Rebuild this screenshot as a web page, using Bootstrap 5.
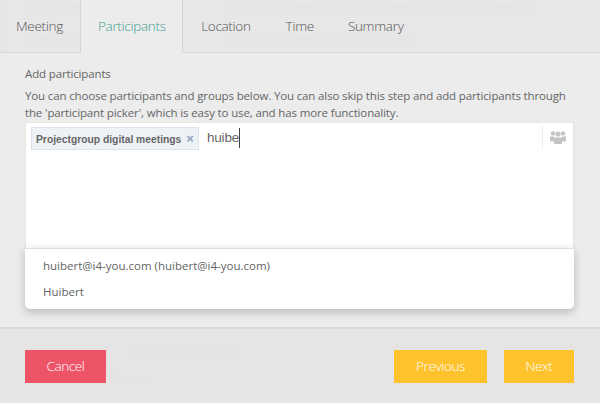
<!DOCTYPE html>
<html lang="en"><head><meta charset="utf-8">
<link href="https://cdn.jsdelivr.net/npm/bootstrap@5.3.0/dist/css/bootstrap.min.css" rel="stylesheet">
<style>
html,body{margin:0;height:403px;overflow:hidden}
body{font-family:"Open Sans","Liberation Sans",sans-serif;background:#ececec;color:#666;font-size:13px}
.stage{width:600px;height:403px;position:relative;overflow:hidden}
.ghost{position:absolute;color:#e3e3e3;font-size:12.4px;font-weight:300;white-space:nowrap;line-height:16px}
.modal-shell{position:absolute;inset:0;display:flex;flex-direction:column}
.tabbar{height:53px;background:#e7e7e7;border-bottom:1px solid #d9d9d9;display:flex;position:relative}
.tabitem{height:53px;padding:0 17.5px;line-height:52px;font-size:13.5px;letter-spacing:-.3px;font-weight:300;color:#555;white-space:nowrap;position:relative}
.tabitem.first{border-left:1px solid #e2e2e2;margin-left:5px;padding:0 17px 0 10px}
.tabitem.on{background:#ececec;color:#3fa08f;border-left:1px solid #d6d6d6;border-right:1px solid #d6d6d6;padding:0 16px 0 17px;margin-right:1px}
.tabitem:last-child{margin-left:-1px}
.bodyarea{height:274px;padding:12px 25px 0;position:relative}
.lbl{font-size:11.5px;letter-spacing:-.14px;line-height:17px;margin-bottom:5px;color:#666}
.desc{font-size:11.5px;letter-spacing:-.14px;line-height:17px;color:#666;margin:0}
.pickbox{height:128px;margin-top:1px;background:#fff;border:1px solid #e6e6e6;border-right-width:2px;display:flex}
.pickmain{flex:1;display:flex;align-items:flex-start;padding:4px 5px}
.chip{background:#eef1f6;border:1px solid #dde3ee;height:23px;width:168px;flex:none;font:700 10.3px/21px "Liberation Sans",Arial,sans-serif;color:#666;padding-left:4px;white-space:nowrap;margin-right:8px}
.chipx{color:#8fa3bd;font-size:13px;margin-left:2px}
.typed{font:13.5px/20px "Liberation Sans",Arial,sans-serif;letter-spacing:-.2px;color:#666;border-right:1px solid #444;height:20px;margin-top:1px}
.pickicon{width:31px;margin:3px 0 0;height:24px;border-left:1px solid #eee;display:flex;align-items:center;justify-content:center;padding-bottom:2px}
.dropbox{position:absolute;left:25px;top:195px;width:549px;height:61px;background:#fff;border-top:1px solid #dedede;border-radius:0 0 5px 5px;box-shadow:0 3px 10px rgba(0,0,0,.22);padding:0 0 0 18px;font-size:11.5px;font-weight:500;color:#636363}
.dropbox div{height:26px;line-height:26px}
.dropbox div:first-child{margin-top:4px}
.footbar{flex:1;background:#e5e5e5;border-top:2px solid #d9d9d9;padding:21px 26px 0 25px;display:flex;position:relative}
.footbar .ghost{color:#e1e1e1}
.actbtn{height:33px;border:0;border-radius:0;color:#fff;font-size:13.5px;letter-spacing:-.4px;font-weight:300;padding:0;line-height:33px;text-align:center;position:relative}
.cancelbtn{width:81px;background:#ee5468}
.prevbtn{width:93px;background:#fec22c;margin-left:auto;margin-right:17px}
.nextbtn{width:70px;background:#fec22c}
</style></head><body>
<div class="stage">
<div class="modal-shell">
 <div class="tabbar">
  <span class="ghost" style="left:29px;top:-1px">Organizer</span>
  <span class="ghost" style="left:230px;top:-1px">Silvan van Heerden | Easy2Meet (silvan@easy2meet.nl)</span>
  <span class="ghost" style="left:29px;top:31px">Created by</span>
  <span class="ghost" style="left:230px;top:31px">Silvan van Heerden | Easy2Meet</span>
  <div class="tabitem first">Meeting</div>
  <div class="tabitem on">Participants</div>
  <div class="tabitem">Location</div>
  <div class="tabitem">Time</div>
  <div class="tabitem">Summary</div>
 </div>
 <div class="bodyarea">
  <div class="lbl">Add participants</div>
  <p class="desc">You can choose participants and groups below. You can also skip this step and add participants through the 'participant picker', which is easy to use, and has more functionality.</p>
  <div class="pickbox">
   <div class="pickmain"><span class="chip">Projectgroup digital meetings <span class="chipx">×</span></span><span class="typed">huibe</span></div>
   <div class="pickicon"><svg width="16" height="14" viewBox="0 0 16 14"><g fill="#c4c4c4"><circle cx="3" cy="3.4" r="2.2"/><circle cx="13" cy="3.4" r="2.2"/><circle cx="8" cy="4" r="2.6"/><path d="M0 6.5h4v5H0.8A.8.8 0 0 1 0 10.700zM12 6.500h4v4.200a.8.8 0 0 1-.8.8H12z"/><path d="M4 7.500h8V13a1 1 0 0 1-1 1H5a1 1 0 0 1-1-1z"/></g></svg></div>
  </div>
  <div class="dropbox"><div>huibert@i4-you.com (huibert@i4-you.com)</div><div>Huibert</div></div>
 </div>
 <div class="footbar">
  <span class="ghost" style="left:129px;top:13px">Actions to be taken</span>
  <span class="ghost" style="left:109px;top:42px">Finance</span>
  <button class="btn actbtn cancelbtn">Cancel</button>
  <button class="btn actbtn prevbtn">Previous</button>
  <button class="btn actbtn nextbtn">Next</button>
 </div>
</div>
</div>
<script src="https://cdn.jsdelivr.net/npm/bootstrap@5.3.0/dist/js/bootstrap.bundle.min.js"></script>
</body></html>
